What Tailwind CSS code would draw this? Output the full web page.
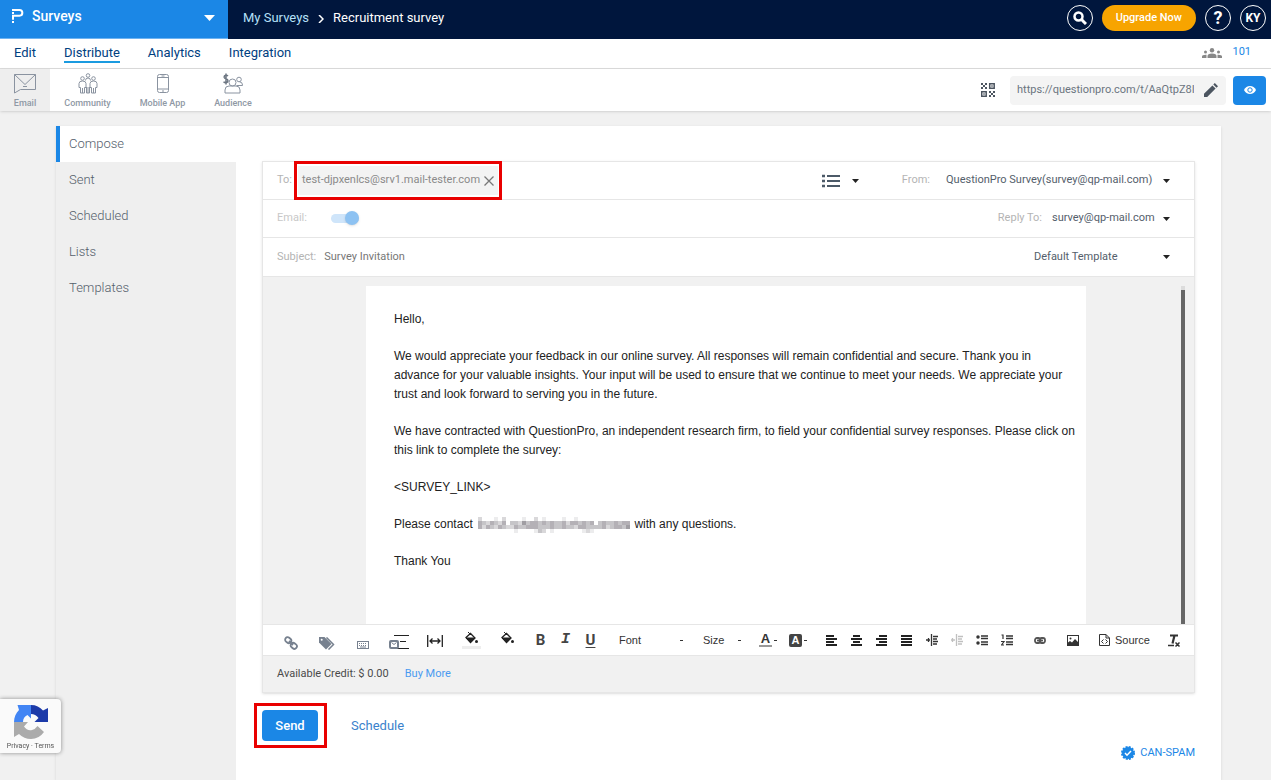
<!DOCTYPE html>
<html lang="en">

<head>
  <meta charset="utf-8">
  <meta name="viewport" content="width=device-width">
  <title>Recruitment survey - Distribute</title>
  <script src="https://cdn.jsdelivr.net/npm/@tailwindcss/browser@4"></script>
</head>

<body class="min-h-screen flex flex-col bg-[#f1f1f1] font-['Roboto','Noto_Sans',sans-serif] text-[13px] text-[#545e6b]">

  <!-- top bar -->
  <header class="flex h-[39px] bg-[#00163d] text-white">
    <button class="flex items-center w-[228px] pl-3 pr-[13px] pb-[6px] bg-[#1b87e6] border-b border-[#6db3f2] text-left">
      <svg class="w-3 h-4 mr-2" viewBox="0 0 12 16" fill="none" stroke="#fff" stroke-width="2">
        <path d="M0 2h7.500a2.800 2.800 0 0 1 0 5.700H1v4" />
        <path d="M0 5h2M0 14h2" />
      </svg>
      <span class="flex-1 text-[14px] font-medium">Surveys</span>
      <svg class="w-[11px] h-[6px] mt-1" viewBox="0 0 11 6"><path d="M0 0h11L5.500 6z" fill="#fff" /></svg>
    </button>
    <nav class="flex items-center gap-[9px] pl-[15px] pb-1">
      <a href="#" class="text-[#b5e1f8]">My Surveys</a>
      <svg class="w-[6px] h-2 mt-[2px]" viewBox="0 0 6 8" fill="none" stroke="#fff" stroke-width="1.500"><path d="M1 0l4 4-4 4" /></svg>
      <span>Recruitment survey</span>
    </nav>
    <div class="flex items-center gap-[9px] ml-auto pr-[5px] pb-[3px]">
      <button class="flex items-center justify-center size-[26px] rounded-full border border-white" aria-label="Search">
        <svg class="size-[14px]" viewBox="0 0 14 14" fill="none" stroke="#fff"><circle cx="5.500" cy="5.500" r="4" stroke-width="2.500" /><path d="M8.500 8.500l4.500 4.500" stroke-width="3" /></svg>
      </button>
      <button class="h-[26px] px-[14px] rounded-full bg-[#f7a400] text-[11px] font-medium">Upgrade Now</button>
      <button class="size-[26px] rounded-full border border-white text-[18px] leading-6 font-bold">?</button>
      <button class="size-[26px] rounded-full border border-white text-[12px] font-bold">KY</button>
    </div>
  </header>

  <!-- main tabs -->
  <nav class="flex items-center h-[30px] pl-[14px] pr-5 pb-[2px] gap-7 bg-white border-b border-[#dcdcdc] text-[#00407f]">
    <a href="#">Edit</a>
    <a href="#" class="leading-4 border-b-2 border-[#1b9be0] mt-[2px]">Distribute</a>
    <a href="#">Analytics</a>
    <a href="#">Integration</a>
    <a href="#" class="flex items-center gap-[10px] ml-auto text-[11px] text-[#1b87e6]">
      <svg class="w-5 h-[10px]" viewBox="0 0 20 10" fill="#888">
        <circle cx="10" cy="2.200" r="2.200" /><path d="M5.500 10V8q0-2.500 4.500-2.500T14.500 8v2z" />
        <circle cx="3.500" cy="4" r="1.500" /><circle cx="16.500" cy="4" r="1.500" />
        <path d="M0 10V8.500Q0 6.500 4.500 6.700V10zM20 10V8.500q0-2-4.500-1.800V10z" />
      </svg>
      101
    </a>
  </nav>

  <!-- distribution channels -->
  <div class="flex h-[42px] bg-white shadow text-[9px] font-medium leading-3 text-[#8f99a5]">
    <a href="#" class="flex flex-col items-center gap-[3px] w-[50px] pt-1 bg-[#eeeeee]">
      <svg class="w-[22px] h-[21px]" viewBox="0 0 22 21" fill="none" stroke="#8a93a0"><path d="M.5 1.500h21v15H6.500l-6 3.500zM.5 1.500L11 11.500l10.500-10M9 13.500h4" /></svg>
      Email
    </a>
    <a href="#" class="flex flex-col items-center gap-[3px] w-[75px] pt-1">
      <svg class="w-5 h-[21px]" viewBox="0 0 20 21" fill="none" stroke="#8a93a0">
        <circle cx="10" cy="2.500" r="1.800" /><circle cx="4.500" cy="5.500" r="1.800" /><circle cx="15.500" cy="5.500" r="1.800" />
        <path d="M7.500 7.500q0-2.500 2.500-2.500t2.500 2.500M1 14.500v-4q0-2.500 3.500-2.500T8 10.500v4H6.500v5.500H2.500v-5.500zM12 14.500v-4q0-2.500 3.500-2.500t3.500 2.500v4h-1.500v5.500h-4v-5.500zM8.500 14v6h3v-6M4.500 15v5M15.500 15v5M10 14v6" />
      </svg>
      Community
    </a>
    <a href="#" class="flex flex-col items-center gap-[3px] w-[75px] pt-1">
      <svg class="w-3 h-[21px]" viewBox="0 0 12 21" fill="none" stroke="#8a93a0"><rect x=".5" y="1.500" width="11" height="18" rx="2" /><path d="M1 4.500h10M1 16h10M4.500 3h3M5 18h2" /></svg>
      Mobile App
    </a>
    <a href="#" class="flex flex-col items-center gap-[3px] w-[66px] pt-1">
      <svg class="w-5 h-[21px]" viewBox="0 0 20 21" fill="none" stroke="#8a93a0">
        <path d="M5 3Q4 2 2.700 2.200 1 2.500 1.200 4.200 1.500 5.300 3 5.700 5 6.200 5 8q-.3 1.500-2 1.700Q1.500 9.700.5 8.700M3 .5v11" stroke="#6d7682" stroke-width="1.500" />
        <circle cx="9.500" cy="9.500" r="3.500" /><circle cx="16" cy="6.500" r="2.300" />
        <path d="M2 20v-3q0-4 4-4h7q4 0 4 4v3zM13.500 12.500h6V12q0-3-3-3.200" />
      </svg>
      Audience
    </a>
    <div class="flex items-center ml-auto pr-[5px]">
      <button class="mr-[15px]" aria-label="QR code">
        <svg class="size-[14px]" viewBox="0 0 14 14" fill="none" stroke="#4c5560" stroke-width="1.500">
          <path d="M8.700.7h4.500v4.500H8.700zM.7 8.700h4.500v4.500H.7z" />
          <path d="M0 1h2M4 1h2M2 3h2M0 5h2M4 5h2M8 9h2M12 9h2M10 11h2M8 13h2M12 13h2M2.500 11h1M10.500 3h1" stroke-width="2" />
        </svg>
      </button>
      <div class="flex items-center w-[216px] h-[29px] pl-[7px] pr-2 rounded-sm bg-[#f4f4f4]">
        <input type="text" aria-label="Survey link" value="https://questionpro.com/t/AaQtpZ8Ik" class="w-[177px] mr-auto text-[11px] font-normal text-[#6b7480] bg-transparent outline-none">
        <button aria-label="Edit link">
          <svg class="size-[14px]" viewBox="0 0 14 14" fill="#4c5560"><path d="M0 14v-3.200L8.400 2.400l3.200 3.200L3.200 14zM9.300 1.500L10.800 0l3.200 3.200-1.500 1.500z" /></svg>
        </button>
      </div>
      <button class="flex items-center justify-center w-[33px] h-[29px] ml-[7px] rounded-sm bg-[#1b87e6]" aria-label="Preview">
        <svg class="w-3 h-2" viewBox="0 0 12 8"><path d="M0 4q2-4 6-4t6 4q-2 4-6 4T0 4z" fill="#fff" /><circle cx="6" cy="4" r="2.200" fill="none" stroke="#1b87e6" /></svg>
      </button>
    </div>
  </div>

  <main class="flex flex-1 mt-[15px] ml-14 mr-[50px] bg-white shadow">

    <aside class="w-[180px] shrink-0 bg-[#efefef] font-light">
      <a href="#" class="flex items-center h-9 pl-[9px] bg-white border-l-4 border-[#1b87e6]">Compose</a>
      <a href="#" class="flex items-center h-9 pl-[13px]">Sent</a>
      <a href="#" class="flex items-center h-9 pl-[13px]">Scheduled</a>
      <a href="#" class="flex items-center h-9 pl-[13px]">Lists</a>
      <a href="#" class="flex items-center h-9 pl-[13px]">Templates</a>
    </aside>

    <section class="flex-1 pt-[35px] pl-[26px] pr-[26px]">
      <div class="border border-[#e6e6e6] shadow-sm text-[11px]">

        <!-- recipients -->
        <div class="flex items-center h-[38px] pl-[14px] pr-[24px] border-b border-[#e6e6e6]">
          <span class="text-[#b4b4b4]">To:</span>
          <div class="relative flex items-center h-[29px] ml-[6px] pl-1 pr-1 gap-1 bg-[#f3f3f3] text-[#8a8a8a]">
            test-djpxenlcs@srv1.mail-tester.com
            <button aria-label="Remove">
              <svg class="size-[10px]" viewBox="0 0 10 10" fill="none" stroke="#777" stroke-width="1.300"><path d="M.5.5l9 9M9.500.5l-9 9" /></svg>
            </button>
            <div class="absolute -inset-x-1 -inset-y-[5px] border-3 border-[#e90000]"></div>
          </div>
          <button class="flex items-center gap-3 ml-auto mr-[43px]" aria-label="Recipient lists">
            <svg class="w-[18px] h-[14px]" viewBox="0 0 18 14" stroke="#4c5a68" stroke-width="1.800"><path d="M5 2h13M5 7h13M5 12h13" /><path d="M0 2h3M0 7h3M0 12h3" stroke-width="2.500" /></svg>
            <svg class="w-[7px] h-1" viewBox="0 0 7 4"><path d="M0 0h7L3.500 4z" fill="#222" /></svg>
          </button>
          <label for="from" class="mr-4 text-[#b4b4b4]">From:</label>
          <select id="from" class="appearance-none mr-[10px]"><option>QuestionPro Survey(survey@qp-mail.com)</option></select>
          <svg class="w-[7px] h-1" viewBox="0 0 7 4"><path d="M0 0h7L3.500 4z" fill="#222" /></svg>
        </div>

        <div class="flex items-center h-[38px] pl-[14px] pr-[24px] border-b border-[#e6e6e6]">
          <label for="email" class="w-[54px] text-[#c8c8c8]">Email:</label>
          <input id="email" type="checkbox" checked class="relative appearance-none w-[28px] h-[9px] rounded-full bg-[#cfe5fa] before:absolute before:right-0 before:-top-[3px] before:size-[14px] before:rounded-full before:bg-[#8dc2f2] before:shadow-sm">
          <label for="reply" class="ml-auto mr-[10px] text-[#b4b4b4]">Reply To:</label>
          <select id="reply" class="appearance-none mr-2"><option>survey@qp-mail.com</option></select>
          <svg class="w-[7px] h-1" viewBox="0 0 7 4"><path d="M0 0h7L3.500 4z" fill="#222" /></svg>
        </div>

        <div class="flex items-center h-[39px] pl-[14px] pr-[24px] border-b border-[#e6e6e6]">
          <label for="subject" class="mr-2 text-[#b4b4b4]">Subject:</label>
          <input id="subject" type="text" value="Survey Invitation" class="flex-1 text-[#777] outline-none">
          <select aria-label="Template" class="appearance-none w-[129px]"><option>Default Template</option></select>
          <svg class="w-[7px] h-1" viewBox="0 0 7 4"><path d="M0 0h7L3.500 4z" fill="#222" /></svg>
        </div>

        <!-- message -->
        <div class="flex h-[347px] pt-[9px] pl-2 pr-[9px] bg-[#f1f1f1] overflow-hidden">
          <div contenteditable="true" class="w-[720px] mx-auto pl-7 pt-6 bg-white outline-none font-['Liberation_Sans',Arial,sans-serif] text-[12px] leading-[19px] text-[#222] space-y-[18px]">
            <p>Hello,</p>
            <p>We would appreciate your feedback in our online survey. All responses will remain confidential and secure. Thank you in<br>
              advance for your valuable insights. Your input will be used to ensure that we continue to meet your needs. We appreciate your<br>
              trust and look forward to serving you in the future.</p>
            <p>We have contracted with QuestionPro, an independent research firm, to field your confidential survey responses. Please click on<br>
              this link to complete the survey:</p>
            <p>&lt;SURVEY_LINK&gt;</p>
            <p>Please contact <svg id="masked" class="inline-block w-[155px] h-4" viewBox="0 0 155 16"></svg> with any questions.</p>
            <p>Thank You</p>
          </div>
          <div class="w-1 bg-[#dcdcdc] pt-1"><div class="h-full bg-[#666]"></div></div>
        </div>

        <!-- editor buttons -->
        <div class="flex items-center h-[32px] pl-[10px] border-y border-[#e6e6e6] bg-white font-['Liberation_Sans',Arial,sans-serif] text-[#333]">
          <div class="flex items-center">
            <button class="flex justify-center w-9 pt-[6px]" aria-label="Survey link">
              <svg class="size-[14px]" viewBox="0 0 14 14" fill="none" stroke="#77818f" stroke-width="1.800"><rect x="1" y="1.500" width="6.500" height="5" rx="2.500" transform="rotate(40 4 4)" /><rect x="6.500" y="7.500" width="6.500" height="5" rx="2.500" transform="rotate(40 10 10)" /><path d="M5 5l4 4" /></svg>
            </button>
            <button class="flex justify-center w-9 pt-[6px]" aria-label="Tags">
              <svg class="w-4 h-[13px]" viewBox="0 0 16 13"><path d="M0 0h5.500l7 7-5.500 5.500-7-7z" fill="#77818f" /><path d="M7.500.5l7 7-5 5" fill="none" stroke="#77818f" stroke-width="1.500" /><circle cx="2.700" cy="2.700" r="1" fill="#fff" /></svg>
            </button>
            <button class="flex justify-center w-9 pt-[10px]" aria-label="Placeholder">
              <svg class="w-3 h-2" viewBox="0 0 12 8" fill="none" stroke="#77818f"><rect x=".5" y=".5" width="11" height="7" /><path d="M2 2.500h8M2 4.500h8" stroke-dasharray="1 1" /><path d="M3 6h6" /></svg>
            </button>
            <button class="flex justify-center w-9 pt-1" aria-label="Email button">
              <svg class="w-5 h-4" viewBox="0 0 20 16"><path d="M5 1.500h15M11 7.500h6M8 14.500h12" stroke="#222" stroke-width="1.200" /><rect y="6" width="10" height="9" rx="2" fill="#77818f" /><path d="M2 8h6v5H2z" fill="#fff" /><path d="M2.500 8.500L5 10.500l2.500-2" fill="none" stroke="#77818f" /></svg>
            </button>
            <button class="flex justify-center w-9 pt-[2px]" aria-label="Width">
              <svg class="w-4 h-3" viewBox="0 0 16 12" fill="none" stroke="#222" stroke-width="1.300"><path d="M.7 0v12M15.300 0v12M3 6h10M5.500 3.500L3 6l2.500 2.500M10.500 3.500L13 6l-2.500 2.500" /></svg>
            </button>
            <button class="flex flex-col items-center w-9" aria-label="Background">
              <svg class="w-[13px] h-3" viewBox="0 0 13 12"><path d="M1 5.500L5.500 1.500l4.500 4.500-4.500 4.500z" fill="none" stroke="#222" stroke-width="1.300" /><path d="M1 6h9l-4.500 4.500zM3 0l3 3" fill="#222" stroke="#222" /><circle cx="11.500" cy="9.500" r="1.500" fill="#222" /></svg>
              <span class="w-[19px] h-[3px] mt-[2px] bg-[#eee]"></span>
            </button>
            <button class="flex justify-center w-9 pb-1" aria-label="Fill">
              <svg class="w-[13px] h-3" viewBox="0 0 13 12"><path d="M1 5.500L5.500 1.500l4.500 4.500-4.500 4.500z" fill="none" stroke="#222" stroke-width="1.300" /><path d="M1 6h9l-4.500 4.500zM3 0l3 3" fill="#222" stroke="#222" /><circle cx="11.500" cy="9.500" r="1.500" fill="#222" /></svg>
            </button>
          </div>
          <div class="flex items-center ml-[3px] font-['Roboto'] text-[15px] leading-5 font-bold text-[#444]">
            <button class="w-[25px]">B</button>
            <button class="w-[25px] font-['Liberation_Mono',monospace] italic">I</button>
            <button class="w-[25px] underline underline-offset-2">U</button>
          </div>
          <div class="flex items-center w-[64px] ml-4">
            <select aria-label="Font" class="appearance-none flex-1"><option>Font</option></select>
            <span class="w-[3px] h-[1px] bg-[#333]"></span>
          </div>
          <div class="flex items-center w-[38px] ml-5">
            <select aria-label="Size" class="appearance-none flex-1"><option>Size</option></select>
            <span class="w-[3px] h-[1px] bg-[#333]"></span>
          </div>
          <button class="flex items-center gap-[2px] ml-[18px]" aria-label="Text color">
            <span class="w-[13px] border-b-2 border-[#999] text-[13px] leading-3 font-bold">A</span>
            <span class="w-[3px] h-[1px] bg-[#333]"></span>
          </button>
          <button class="flex items-center gap-[2px] ml-3" aria-label="Highlight color">
            <span class="size-[13px] rounded-xs bg-[#444] text-[11px] leading-[13px] font-bold text-white">A</span>
            <span class="w-[3px] h-[1px] bg-[#333]"></span>
          </button>
          <div class="flex ml-3">
            <button class="flex justify-center w-[25px]" aria-label="Align left"><svg class="w-[11px] h-3" viewBox="0 0 11 12" stroke="#222" stroke-width="2"><path d="M0 2h8M0 5h11M0 8h8M0 11h11" /></svg></button>
            <button class="flex justify-center w-[25px]" aria-label="Center"><svg class="w-[11px] h-3" viewBox="0 0 11 12" stroke="#222" stroke-width="2"><path d="M2 2h7M0 5h11M2 8h7M0 11h11" /></svg></button>
            <button class="flex justify-center w-[25px]" aria-label="Align right"><svg class="w-[11px] h-3" viewBox="0 0 11 12" stroke="#222" stroke-width="2"><path d="M3 2h8M0 5h11M3 8h8M0 11h11" /></svg></button>
            <button class="flex justify-center w-[25px]" aria-label="Justify"><svg class="w-[11px] h-3" viewBox="0 0 11 12" stroke="#222" stroke-width="2"><path d="M0 2h11M0 5h11M0 8h11M0 11h11" /></svg></button>
            <button class="flex justify-center w-[25px]" aria-label="Indent"><svg class="w-3 h-3" viewBox="0 0 12 12" fill="none" stroke="#333"><path d="M5.500 0v12M7 2.500h5M7 5h4M7 7.500h5M7 10h4M0 6h4M2.500 4v4" stroke-width="1.300" /></svg></button>
            <button class="flex justify-center w-[25px] opacity-30" aria-label="Outdent" disabled><svg class="w-3 h-3" viewBox="0 0 12 12" fill="none" stroke="#333"><path d="M5.500 0v12M7 2.500h5M7 5h4M7 7.500h5M7 10h4M0 6h4M1.500 4v4" stroke-width="1.300" /></svg></button>
            <button class="flex justify-center w-[25px]" aria-label="Bulleted list"><svg class="w-3 h-3" viewBox="0 0 12 12" fill="#333" stroke="#333" stroke-width="1.500"><path d="M5 2h7M5 4.500h7M5 8h7M5 10.500h7" /><circle cx="2" cy="3" r="1" /><circle cx="2" cy="9" r="1" /></svg></button>
            <button class="flex justify-center w-[25px]" aria-label="Numbered list"><svg class="w-3 h-3" viewBox="0 0 12 12" fill="none" stroke="#333" stroke-width="1.500"><path d="M5 2h7M5 4.500h7M5 8h7M5 10.500h7" /><path d="M.5 1h1.500v4M0 7.500h3L.5 11H3" stroke-width="1.200" /></svg></button>
          </div>
          <button class="ml-[15px]" aria-label="Link">
            <svg class="w-3 h-[7px]" viewBox="0 0 12 7" fill="none" stroke="#555" stroke-width="1.800"><rect x="1" y="1" width="5.500" height="5" rx="2" /><rect x="5.500" y="1" width="5.500" height="5" rx="2" /><path d="M3 3.500h6" /></svg>
          </button>
          <button class="ml-[21px]" aria-label="Image">
            <svg class="w-3 h-[11px]" viewBox="0 0 12 11"><rect x=".5" y=".5" width="11" height="10" fill="none" stroke="#333" /><path d="M1 10V7.500l2-1.500 2 1.500L8 4l3 3v3z" fill="#333" /><circle cx="3.500" cy="3.500" r="1" fill="#333" /></svg>
          </button>
          <button class="flex items-center gap-[5px] ml-5">
            <svg class="w-[11px] h-3" viewBox="0 0 11 12" fill="none" stroke="#333"><path d="M.5.5h6.500l3.500 3.500v7.500H.5zM7 .5V4h3.500M4.500 5.500l-2 2 2 2M6.500 5.500l2 2-2 2" /></svg>
            Source
          </button>
          <button class="ml-[18px]" aria-label="Remove format">
            <svg class="size-[13px]" viewBox="0 0 13 13" fill="none" stroke="#333"><path d="M2 1.500h8M6.500 1.500l-2 8" stroke-width="2.200" /><path d="M0 11.500h6M7.500 8.500l4 4M11.500 8.500l-4 4" stroke-width="1.500" /></svg>
          </button>
        </div>

        <div class="flex items-center gap-4 h-9 px-[14px] bg-[#f1f1f1]">
          <span class="text-[#4a4a4a]">Available Credit: $ 0.00</span>
          <a href="#" class="text-[#4a9af0]">Buy More</a>
        </div>
      </div>

      <div class="flex items-center gap-[33px] mt-[17px]">
        <div class="relative">
          <button class="block w-[56px] h-[31px] rounded-sm bg-[#1b87e6] font-medium text-white">Send</button>
          <div class="absolute -left-2 -right-[9px] -inset-y-[7px] border-3 border-[#e90000] pointer-events-none"></div>
        </div>
        <a href="#" class="text-[#3a82cc]">Schedule</a>
      </div>
      <a href="#" class="flex items-center justify-end gap-[5px] leading-5 mt-[2px] text-[11px] text-[#1b87e6]">
        <svg class="size-[14px]" viewBox="0 0 14 14"><circle cx="7" cy="7" r="6" fill="#1b87e6" stroke="#1b87e6" stroke-width="2" stroke-dasharray="2 1.140" /><path d="M4 7l2 2.200 4-4.200" fill="none" stroke="#fff" stroke-width="1.500" /></svg>
        CAN-SPAM
      </a>
    </section>
  </main>

  <!-- recaptcha badge -->
  <div class="fixed left-0 bottom-[27px] flex flex-col items-center w-[61px] h-[54px] pt-[6px] rounded-r-sm bg-[#fafafa] shadow-[0_0_4px_#888] text-[7px] leading-[10px] text-[#555]">
    <svg class="size-[34px] mb-[2px]" viewBox="0 0 34 34">
      <path d="M17 0c5 0 9 2 12 5.500L34 3v14H20.500l4-4C22.500 10.500 20 9 17 9z" fill="#1c3aa9" />
      <path d="M0 17C0 12 2 8 5 5L3.500 0H17v13.500l-3.500-3.500Q9 12 9 17z" fill="#4285f4" />
      <path d="M0 17h14l-4 4.500q3 4.500 8 3.500 3-.5 5.500-4L30 27q-5 7-13 7-7 0-12-5l-5 3z" fill="#ababab" />
    </svg>
    <p><a href="#">Privacy</a> · <a href="#">Terms</a></p>
  </div>

  <script>
    // grey mosaic over the contact address, one digit per 4px cell (0 = empty, 9 = darkest)
    const rows = [
      "20001020000100201000010010000000000000",
      "43243240332534434343342443434034334344",
      "42432432243344433343343324433334234435",
      "00000000010000132010000000121000000000"
    ]
    let cells = ""
    rows.forEach(function (row, y) {
      row.split("").forEach(function (c, x) {
        cells += `<rect x="${x * 4 + 2}" y="${y * 4}" width="4" height="4" fill="#55505a" fill-opacity="${c / 9}"/>`
      })
    })
    document.getElementById("masked").innerHTML = cells
  </script>
</body>

</html>
